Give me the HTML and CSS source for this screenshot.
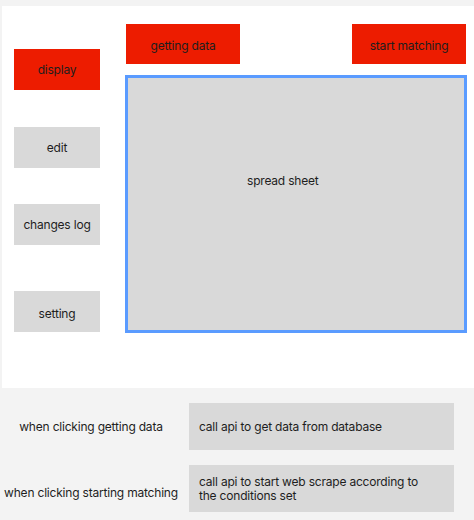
FILE: index.html
```html
<!DOCTYPE html>
<html lang="en">
<head>
  <meta charset="UTF-8" />
  <title>Matching tool wireframe</title>
  <link rel="stylesheet" href="styles.css">
</head>
<body>

  <div class="canvas">
    <!-- left menu -->
    <nav class="sidebar">
      <div class="btn btn-red nav-display">display</div>
      <div class="btn btn-gray nav-edit">edit</div>
      <div class="btn btn-gray nav-log">changes log</div>
      <div class="btn btn-gray nav-setting">setting</div>
    </nav>

    <main class="main">
      <div class="toolbar">
        <div class="btn btn-red tool-btn">getting data</div>
        <div class="btn btn-red tool-btn">start matching</div>
      </div>
      <div class="sheet">
        <span class="sheet-label">spread sheet</span>
      </div>
    </main>
  </div>

  <!-- notes -->
  <section class="notes">
    <div class="note-label">when clicking getting data</div>
    <div class="note-box">call api to get data from database</div>
    <div class="note-label note-label-low">when clicking starting matching</div>
    <div class="note-box">call api to start web scrape according to the conditions set</div>
  </section>

</body>
</html>
```

FILE: styles.css
```css
/* --- base --- */
:root {
  --red: #ed1c00; --gray: #d9d9d9; --blue: #5a9bff;
  --text: #1e1e1e; --page: #f3f3f3;
}
*, *::before, *::after { box-sizing: border-box; margin: 0; padding: 0; }
body {
  font-family: Inter, "Liberation Sans", sans-serif;
  font-size: 12px; line-height: 14px; letter-spacing: -0.2px;
  color: var(--text); background: var(--page);
  width: 474px; height: 520px; overflow: hidden;
}

/* --- top canvas --- */
.canvas {
  display: flex; background: #fff;
  margin: 6px 0 0 2px; height: 382px;
}
.btn {
  display: flex; align-items: center; justify-content: center;
  height: 41px; white-space: nowrap;
}
.btn-red { background: var(--red); }
.btn-gray { background: var(--gray); }

.sidebar {
  display: flex; flex-direction: column;
  width: 98px; padding: 43px 0 0 12px;
}
.sidebar .btn { width: 86px; }
.nav-display { padding-top: 1px; }
.nav-edit { margin-top: 37px; }
.nav-log { margin-top: 36px; }
.nav-setting { margin-top: 46px; padding-top: 4px; }

.main { margin-left: 25px; padding-top: 18px; width: 342px; }
.toolbar { display: flex; justify-content: space-between; padding-left: 1px; padding-right: 1px; }
.tool-btn { width: 114px; height: 40px; padding-top: 3px; }

.sheet {
  margin-top: 11px; height: 258px;
  background: var(--gray); border: 3px solid var(--blue);
  padding: 96px 0 0 119px;
}

/* --- notes --- */
.notes {
  display: grid; grid-template-columns: 182px 265px;
  grid-auto-rows: 47px; column-gap: 7px; row-gap: 15px;
  padding-top: 15px;
}
.note-label { display: flex; align-items: center; justify-content: center; white-space: nowrap; }
.note-label-low { padding-top: 8px; }
.note-box {
  display: flex; align-items: center;
  background: var(--gray); padding: 0 32px 0 10px;
}
```
